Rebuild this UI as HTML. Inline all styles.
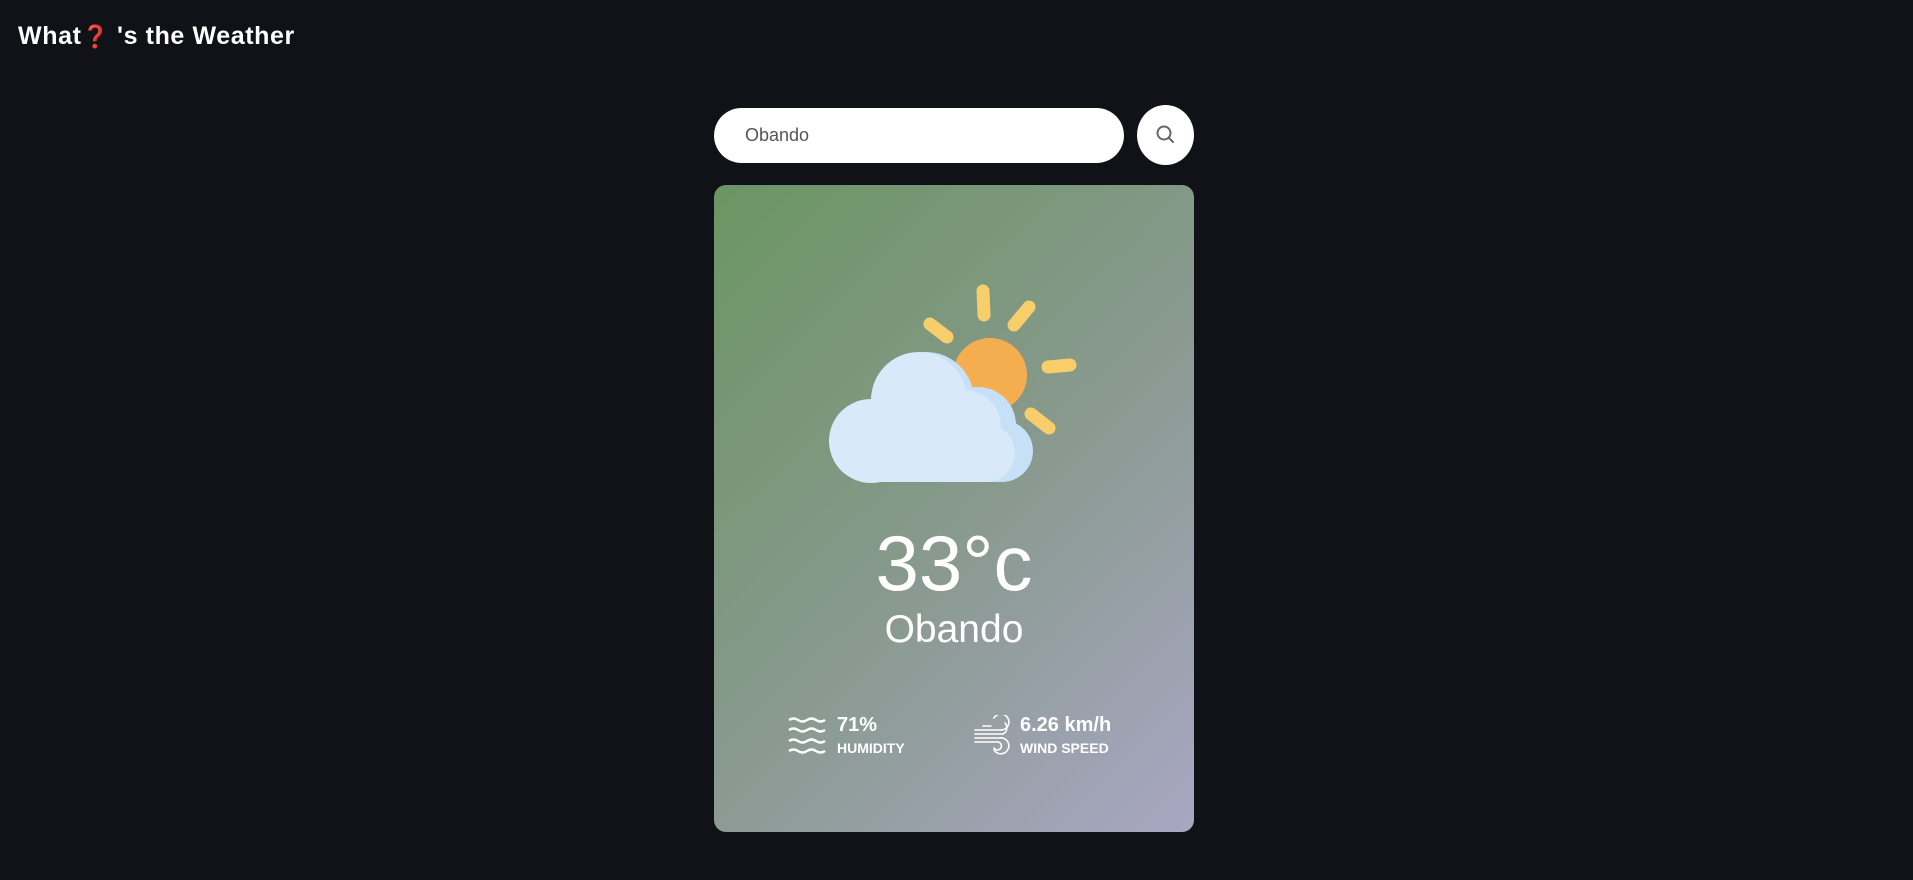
<!DOCTYPE html>
<html><head><meta charset="utf-8"><style>
*{margin:0;padding:0;box-sizing:border-box}
body{width:1913px;height:880px;background:#111218;font-family:"Liberation Sans","Noto Sans CJK JP",sans-serif;position:relative;overflow:hidden;color:#fff}
h1{position:absolute;left:18px;top:22px;font-size:25px;font-weight:bold;color:#fff;letter-spacing:0.6px}
.inp{position:absolute;left:714px;top:108px;width:410px;height:55px;background:#fff;border-radius:28px;font-size:18px;color:#555;padding-left:31px;line-height:55px}
.btn{position:absolute;left:1137px;top:105px;width:57px;height:60px;border-radius:50%;background:#fff}
.card{position:absolute;left:714px;top:185px;width:480px;height:647px;border-radius:12px;background:linear-gradient(135deg,#6b9563 0%,#87998c 50%,#a8a7c3 100%)}
.t{position:absolute;left:0;width:100%;text-align:center}
</style></head><body>
<h1>What<span style="color:#e0262b;font-size:22px">❓</span> 's the Weather</h1>
<div class="inp">Obando</div>
<div class="btn"><svg width="57" height="60" viewBox="0 0 57 60"><circle cx="27" cy="28" r="6.5" fill="none" stroke="#666" stroke-width="2"/><line x1="32" y1="33" x2="36" y2="37" stroke="#666" stroke-width="2" stroke-linecap="round"/></svg></div>
<div class="card">
<svg style="position:absolute;left:0;top:0" width="480" height="330" viewBox="0 0 480 330">
<g stroke="#f8ce6a" stroke-width="13" stroke-linecap="round">
<line x1="269" y1="106" x2="270" y2="130"/>
<line x1="315" y1="122" x2="300" y2="140"/>
<line x1="334" y1="182" x2="356" y2="180"/>
<line x1="317" y1="229" x2="335" y2="243"/>
<line x1="216" y1="139" x2="233" y2="152"/>
</g>
<circle cx="276" cy="190" r="37" fill="#f4ae50"/>
<g fill="#c6e0f8">
<circle cx="212" cy="215" r="48"/><circle cx="264" cy="240" r="38"/><circle cx="288" cy="266" r="31"/><rect x="157" y="240" width="131" height="57"/>
</g>
<g fill="#d9e9fa">
<circle cx="157" cy="256" r="42"/><circle cx="205" cy="215" r="48"/><circle cx="250" cy="242" r="37"/><circle cx="272" cy="268" r="29"/><rect x="157" y="240" width="115" height="57"/>
</g>
</svg>
<div class="t" style="top:333px;font-size:78px;line-height:90px;font-weight:300">33°c</div>
<div class="t" style="top:422px;font-size:39px;line-height:46px">Obando</div>
<svg style="position:absolute;left:74px;top:532px" width="40" height="38" viewBox="0 0 40 38" fill="none" stroke="#fff" stroke-width="2.5"><path d="M1 3 q4.5-3 9 0 t9 0 t9 0 t9 0"/><path d="M1 13 q4.5-3 9 0 t9 0 t9 0 t9 0"/><path d="M1 24 q4.5-3 9 0 t9 0 t9 0 t9 0"/><path d="M1 34 q4.5-3 9 0 t9 0 t9 0 t9 0"/></svg>
<div style="position:absolute;left:123px;top:529px;font-weight:bold;font-size:20px">71%</div>
<div style="position:absolute;left:123px;top:555px;font-weight:bold;font-size:14px">HUMIDITY</div>
<svg style="position:absolute;left:259px;top:530px" width="38" height="40" viewBox="0 0 38 40" fill="none" stroke="#fff" stroke-width="1.6" stroke-linecap="round">
<path d="M2 15 H27 A8 8 0 1 0 21 3"/><path d="M2 19 H28 A11.5 11.5 0 1 0 18 2" opacity="0"/>
<path d="M2 19 H30 A7 7 0 0 0 32 8"/>
<path d="M2 23 H26 A8 8 0 1 1 21 35"/><path d="M2 27 H24 A4 4 0 1 1 21 33"/><path d="M10 11 H18"/></svg>
<div style="position:absolute;left:306px;top:529px;font-weight:bold;font-size:20px">6.26 km/h</div>
<div style="position:absolute;left:306px;top:555px;font-weight:bold;font-size:14px">WIND SPEED</div>
</div>
</body></html>
